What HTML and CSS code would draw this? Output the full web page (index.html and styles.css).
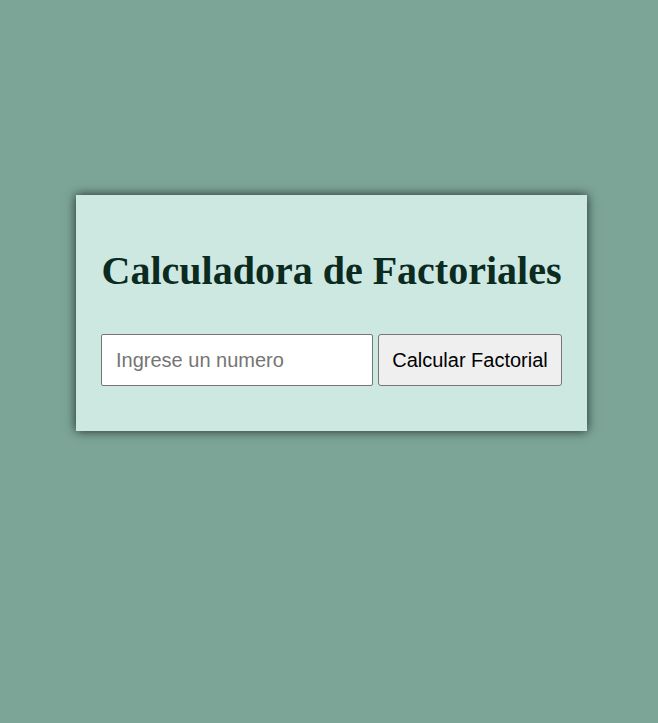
FILE: index.html
```html
<!DOCTYPE html>
<html lang="es">
<head>
<meta charset="utf-8">
<title>Calculadora de Factoriales</title>
<link rel="stylesheet" href="styles.css">
</head>
<body>
<div class="card">
  <h1 class="title">Calculadora de Factoriales</h1>
  <div class="row"><input class="field" type="text" placeholder="Ingrese un numero"> <button class="btn">Calcular Factorial</button></div>
</div>
</body>
</html>
```
FILE: styles.css
```css
html, body {
  margin: 0;
  padding: 0;
}
body {
  background: #7ca597;
  min-height: 723px;
  font-family: "Liberation Sans", Arial, sans-serif;
  display: flex;
  justify-content: center;
  align-items: flex-start;
  padding-top: 195px;
  box-sizing: border-box;
}
.card {
  background: #cde8e1;
  padding: 25px;
  box-shadow: 0 0 10px rgba(0, 0, 0, 0.75);
  margin-left: 5px;
  width: 461px;
}
.title {
  font-family: "Liberation Serif", "Times New Roman", serif;
  font-size: 40px;
  font-weight: bold;
  color: #0b2a20;
  margin: 28px 0 40px;
  line-height: 46px;
  white-space: nowrap;
  text-align: center;
}
.row {
  display: flex;
  gap: 5px;
  margin-bottom: 20px;
}
.field {
  flex: 1;
  min-width: 0;
  box-sizing: border-box;
  height: 52px;
  padding: 0 14px;
  font-family: "Liberation Sans", Arial, sans-serif;
  font-size: 20px;
  border: 1px solid #767676;
  border-radius: 2px;
  background: #fff;
  color: #000;
}
.field::placeholder {
  color: #757575;
}
.btn {
  width: 184px;
  flex: none;
  height: 52px;
  box-sizing: border-box;
  padding: 0;
  white-space: nowrap;
  font-family: "Liberation Sans", Arial, sans-serif;
  font-size: 20px;
  border: 1px solid #767676;
  border-radius: 3px;
  background: #efefef;
  color: #000;
}
```
